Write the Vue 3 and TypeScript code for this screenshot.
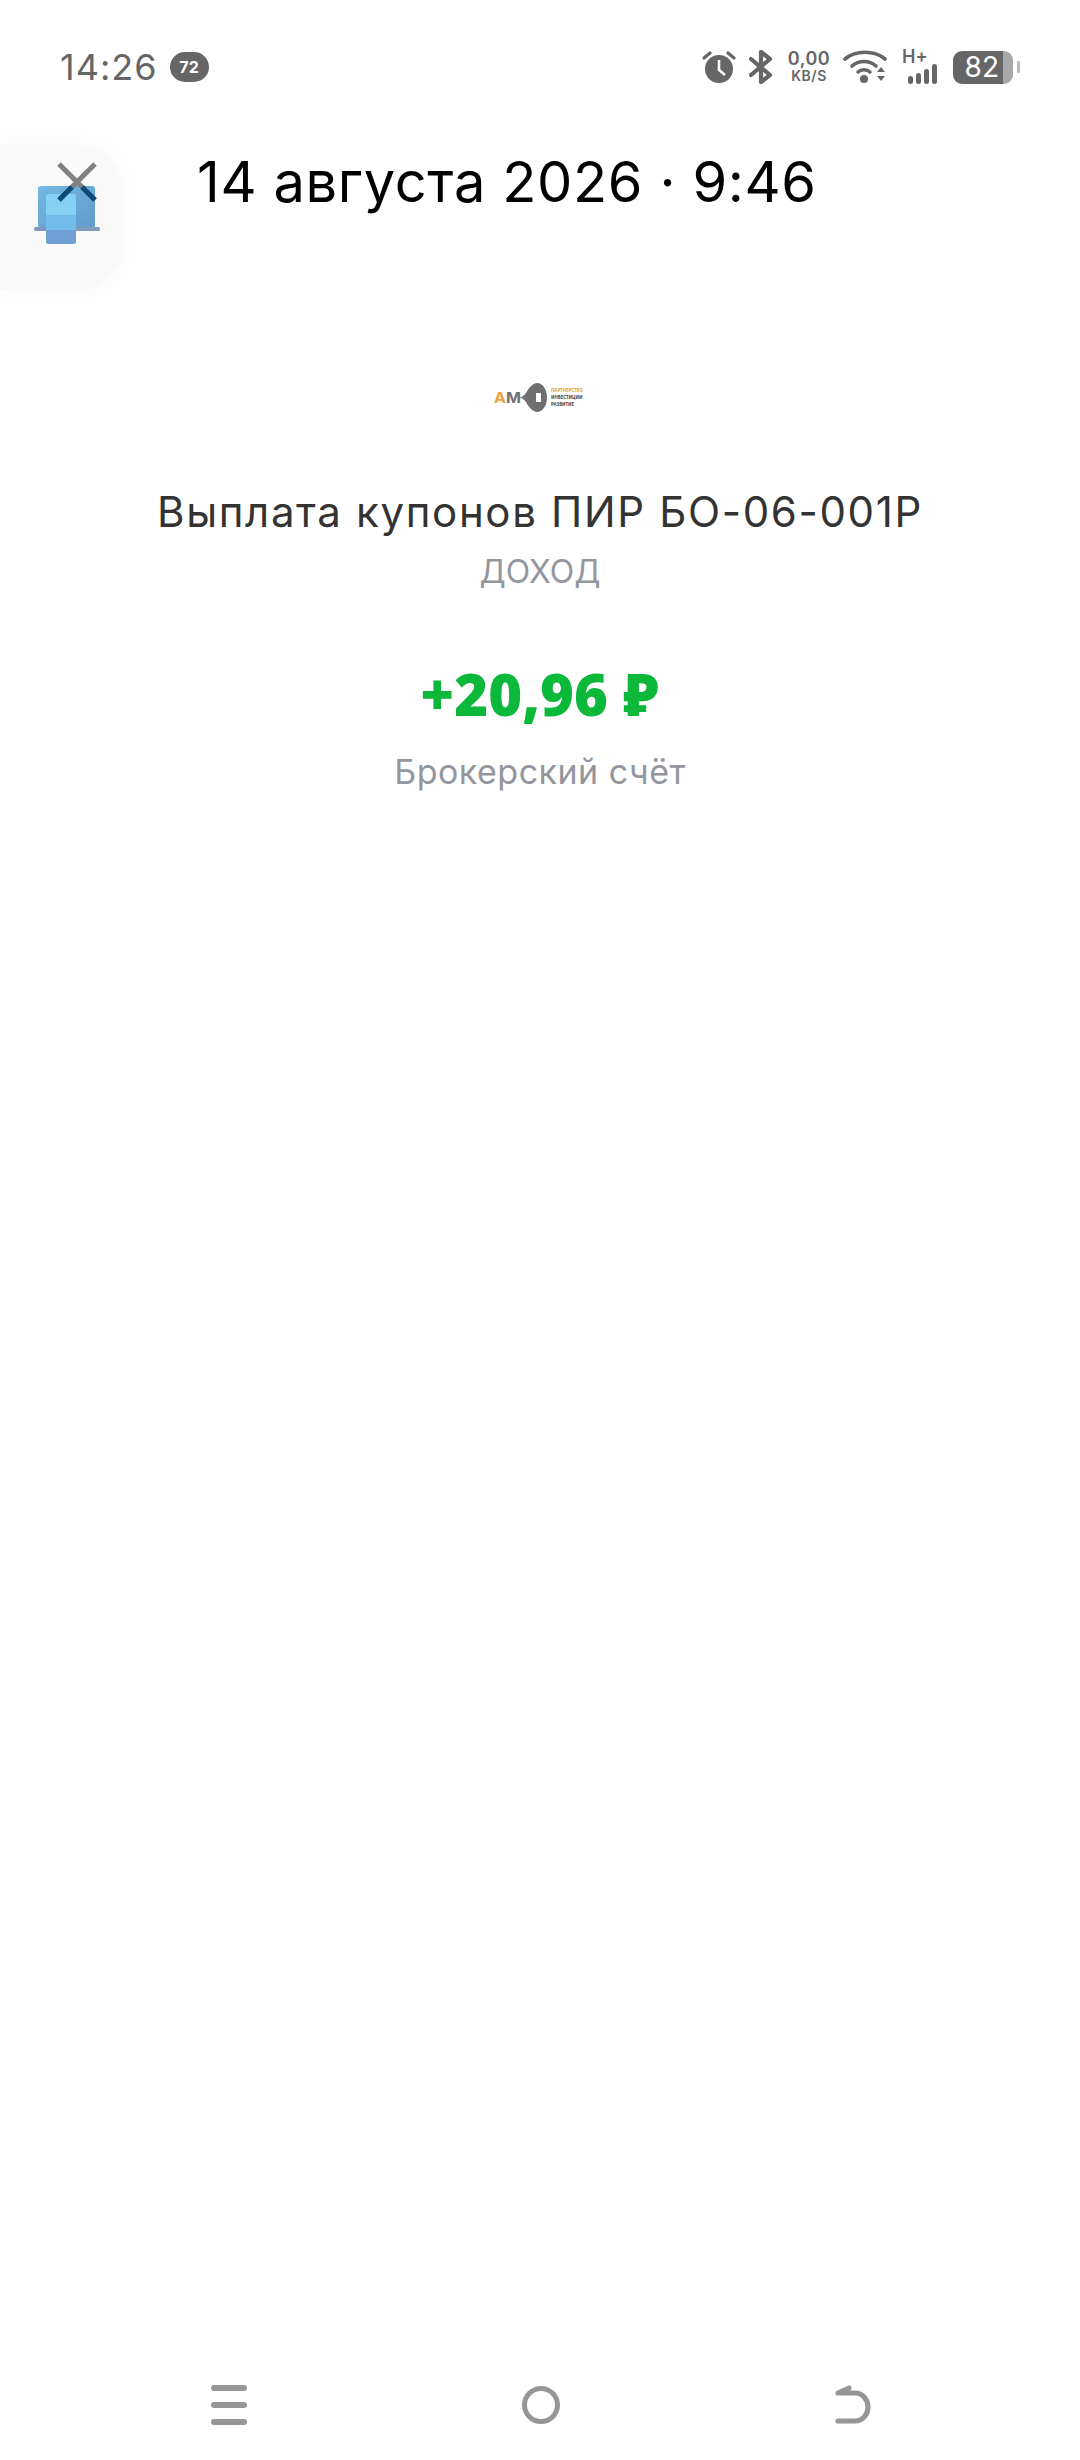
<script setup lang="ts">
const detail = {
  date: '14 августа 2026 · 9:46',
  title: 'Выплата купонов ПИР БО-06-001Р',
  kind: 'ДОХОД',
  amount: '+20,96 ₽',
  account: 'Брокерский счёт'
}
</script>

<template>
  <div class="page">
    <!-- статус-бар -->
    <div class="status">
      <div class="status-left">
        <span class="time">14:26</span>
        <span class="badge">72</span>
      </div>
      <div class="status-right">
        <svg class="alarm" width="34" height="34" viewBox="0 0 34 34">
          <circle cx="17" cy="19" r="14" fill="#666" />
          <path d="M17 10v10l6 5" fill="none" stroke="#fff" stroke-width="2.6" />
          <path d="M2 8l6-5M32 8l-6-5" fill="none" stroke="#666" stroke-width="3.2" stroke-linecap="round" />
        </svg>
        <svg class="bt" width="24" height="34" viewBox="0 0 24 34">
          <path d="M2 9l19 16-9 7V2l9 7L2 25" fill="none" stroke="#666" stroke-width="4.2" stroke-linejoin="round" stroke-linecap="round" />
        </svg>
        <div class="speed">
          <span class="speed-num">0,00</span>
          <span class="speed-unit">KB/S</span>
        </div>
        <svg class="wifi" width="44" height="34" viewBox="0 0 44 34">
          <path d="M2 9c11-9 29-9 40 0" fill="none" stroke="#666" stroke-width="3.6" stroke-linecap="round" />
          <path d="M9 16c7-6 17-6 24 0" fill="none" stroke="#666" stroke-width="3.6" stroke-linecap="round" />
          <path d="M15 22c3-3 9-3 12 0" fill="none" stroke="#666" stroke-width="3.4" stroke-linecap="round" />
          <circle cx="21" cy="29" r="4" fill="#666" />
          <path d="M34 22l4-5 4 5zM34 26h8l-4 5z" fill="#666" />
        </svg>
        <div class="signal">
          <span class="net">H+</span>
          <div class="bars">
            <i v-for="h in [8, 11, 15, 20]" :key="h" :style="{ height: h + 'px' }"></i>
          </div>
        </div>
        <div class="battery">
          <div class="battery-fill">82</div>
          <div class="battery-rest"></div>
          <div class="battery-nub"></div>
        </div>
      </div>
    </div>

    <!-- шапка -->
    <div class="header">
      <div class="float-app">
        <svg width="70" height="64" viewBox="0 0 70 64">
          <defs>
            <linearGradient id="lap" x1="0" y1="0" x2="1" y2="1">
              <stop offset="0" stop-color="#74b8e4" />
              <stop offset="1" stop-color="#5f9aca" />
            </linearGradient>
          </defs>
          <rect x="4" y="0" width="57" height="42" rx="3" fill="url(#lap)" />
          <rect x="0" y="41" width="66" height="4" rx="1.5" fill="#7f9abb" />
          <rect x="12" y="8" width="30" height="50" rx="2.5" fill="#6f9fd4" />
          <path d="M12 10.5a2.5 2.5 0 0 1 2.5-2.5h25a2.5 2.5 0 0 1 2.5 2.5V29H12z" fill="#84d2f3" />
          <rect x="12" y="29" width="30" height="15" fill="#72bdeb" />
        </svg>
      </div>
      <svg class="close" width="40" height="40" viewBox="0 0 40 40">
        <path d="M2 2l36 36M38 2L2 38" fill="none" stroke="#808080" stroke-width="5" />
        <path d="M15 25L2 38M25 25l13 13" fill="none" stroke="#0b4a78" stroke-width="5" />
      </svg>
      <div class="date">{{ detail.date }}</div>
    </div>

    <!-- операция -->
    <div class="content">
      <div class="logo">
        <svg width="92" height="30" viewBox="0 0 92 30">
          <text x="0" y="20" class="logo-a" textLength="12" lengthAdjust="spacingAndGlyphs">А</text>
          <text x="12" y="20" class="logo-m" textLength="15" lengthAdjust="spacingAndGlyphs">М</text>
          <path d="M25 14.5c4 0 7-4 9-8 3-4 6-6.5 9-6.5 6 0 10 7 10 14.5s-4 14.5-10 14.5c-3 0-6-2.5-9-6.5-2-4-5-8-9-8z" fill="#6f6f6f" />
          <rect x="42" y="10" width="5" height="9" fill="#fff" />
          <text x="57" y="9" class="logo-t orange">ПАРТНЕРСТВО</text>
          <text x="57" y="16" class="logo-t">ИНВЕСТИЦИИ</text>
          <text x="57" y="23" class="logo-t">РАЗВИТИЕ</text>
        </svg>
      </div>
      <div class="title">{{ detail.title }}</div>
      <div class="kind">{{ detail.kind }}</div>
      <div class="amount">{{ detail.amount }}</div>
      <div class="account">{{ detail.account }}</div>
    </div>

    <!-- навигация -->
    <div class="nav">
      <div class="menu"><i></i><i></i><i></i></div>
      <div class="home"></div>
      <svg class="back" width="36" height="40" viewBox="0 0 36 40">
        <path d="M3 36h17c8 0 13-7 13-14s-5-14-13-14H3l11-5" fill="none" stroke="#969696" stroke-width="5.2" stroke-linecap="round" stroke-linejoin="round" />
      </svg>
    </div>
  </div>
</template>

<style>
html, body { margin: 0; background: #fff; }
</style>

<style scoped>
.page {
  position: relative;
  height: 100vh;
  display: flex;
  flex-direction: column;
  background: #fff;
  font-family: Inter, "Noto Sans", sans-serif;
  overflow: hidden;
}
.status {
  display: flex;
  justify-content: space-between;
  align-items: center;
  height: 34px;
  padding: 50px 60px 0 60px;
  color: #666;
}
.status-left { display: flex; align-items: center; gap: 12px; }
.time { font-size: 36px; line-height: 34px; letter-spacing: 1px; }
.badge {
  width: 39px;
  height: 30px;
  border-radius: 15px;
  background: #666;
  color: #fff;
  font-size: 16px;
  font-weight: 700;
  line-height: 30px;
  text-align: center;
}
.status-right { display: flex; align-items: center; }
.alarm { margin-right: 13px; }
.bt { margin-right: 14px; }
.speed {
  display: flex;
  flex-direction: column;
  align-items: center;
  width: 42px;
  margin-right: 13px;
  margin-left: 1px;
  font-weight: 600;
  line-height: 17px;
}
.speed-num { font-size: 18px; letter-spacing: 0.5px; }
.speed-unit { font-size: 14px; letter-spacing: 0.5px; }
.wifi { margin-right: 15px; }
.signal { position: relative; width: 35px; height: 34px; margin-right: 16px; }
.net {
  position: absolute;
  left: 0;
  top: -2px;
  font-size: 18px;
  font-weight: 600;
  line-height: 18px;
}
.bars {
  position: absolute;
  right: 0;
  bottom: 0;
  display: flex;
  align-items: flex-end;
  gap: 3px;
}
.bars i { width: 5px; background: #666; border-radius: 2.5px; }
.battery { display: flex; align-items: center; }
.battery-fill {
  width: 50px;
  height: 33px;
  background: #666;
  border-radius: 9px 0 0 9px;
  color: #fff;
  font-size: 28px;
  line-height: 33px;
  text-align: right;
  padding-right: 4px;
  box-sizing: border-box;
}
.battery-rest {
  width: 10px;
  height: 33px;
  background: #a8a8a8;
  border-radius: 0 9px 9px 0;
  margin-right: 4px;
}
.battery-nub { width: 3px; height: 12px; background: #bbb; border-radius: 1px; }

.header {
  position: relative;
  display: flex;
  align-items: center;
  height: 74px;
  margin-top: 61px;
  padding-left: 57px;
}
.float-app {
  position: absolute;
  left: 0;
  top: 0;
  width: 122px;
  height: 145px;
  padding: 41px 0 0 34px;
  box-sizing: border-box;
  background: #f9f9f9;
  border-radius: 0 44px 44px 0;
  box-shadow: 0 0 18px 6px #fbfbfb;
}
.close { position: relative; flex: none; }
.date {
  position: relative;
  margin-left: 100px;
  font-size: 56px;
  line-height: 74px;
  letter-spacing: 0.6px;
  color: #000;
  white-space: nowrap;
}
.content {
  display: flex;
  flex-direction: column;
  align-items: center;
}
.logo { height: 30px; margin-top: 164px; }
.logo-a { font-size: 15px; font-weight: 700; fill: #eda13a; }
.logo-m { font-size: 15px; font-weight: 700; fill: #6f6f6f; }
.logo-t { font-family: "Noto Sans", sans-serif; font-size: 4.4px; font-weight: 700; fill: #444; }
.logo-t.orange { fill: #e0a33e; }
.title {
  margin-top: 69px;
  font-size: 42px;
  line-height: 60px;
  letter-spacing: 1.65px;
  color: #333;
  white-space: nowrap;
}
.kind { margin-top: 6px; font-size: 32px; line-height: 48px; color: #94969e; }
.amount {
  margin-top: 60px;
  font-family: "Noto Sans", sans-serif;
  font-size: 58px;
  line-height: 76px;
  font-weight: 900;
  color: #0cb83a;
}
.account { margin-top: 16px; font-size: 34px; line-height: 48px; letter-spacing: 0.5px; color: #94969e; }

.nav {
  display: flex;
  justify-content: space-between;
  align-items: center;
  margin-top: auto;
  padding: 0 209px 35px 211px;
  height: 40px;
}
.menu { display: flex; flex-direction: column; gap: 11px; width: 36px; }
.menu i { height: 6px; border-radius: 3px; background: #969696; }
.home {
  width: 38px;
  height: 38px;
  box-sizing: border-box;
  border: 5.5px solid #969696;
  border-radius: 50%;
}
</style>
